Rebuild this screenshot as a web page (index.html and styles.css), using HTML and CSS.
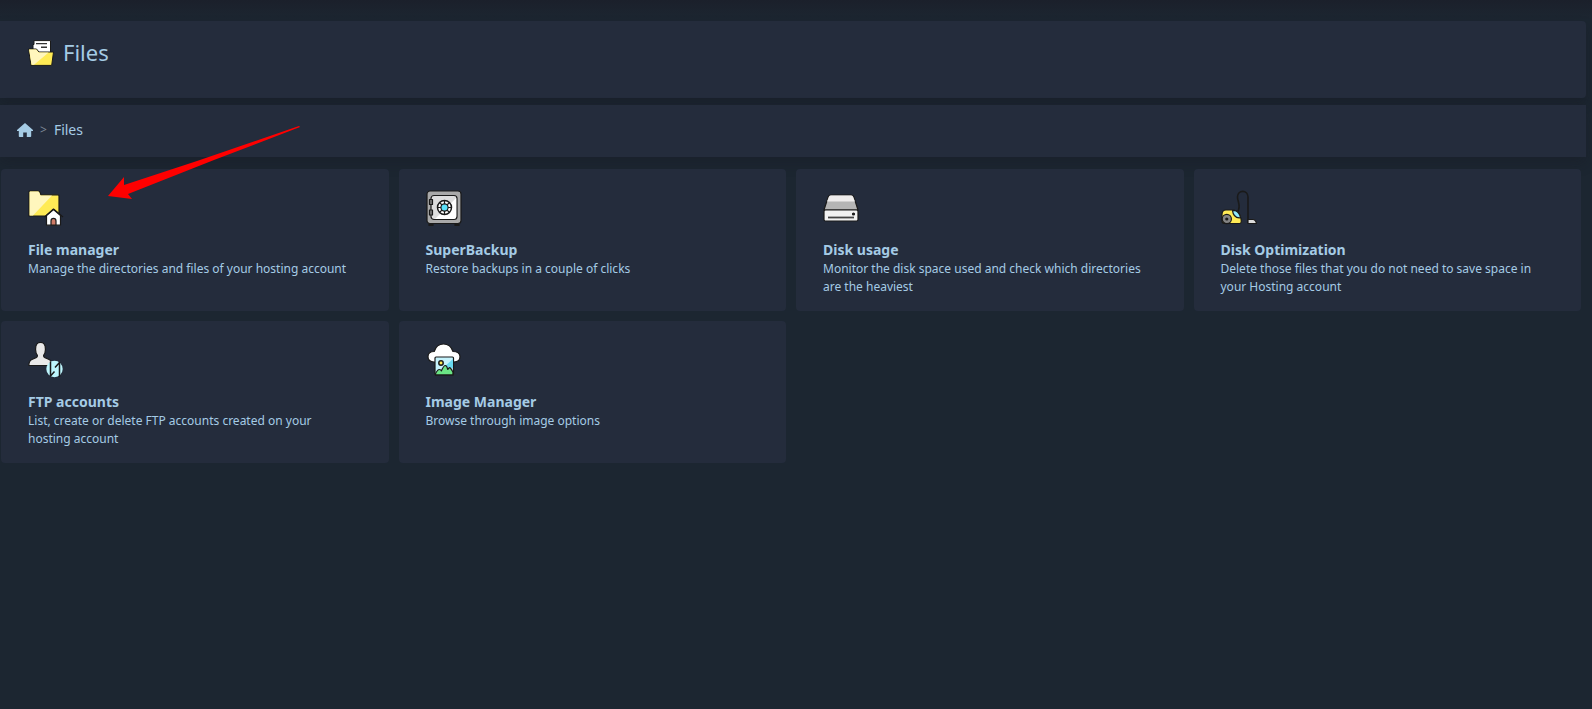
FILE: index.html
```html
<!DOCTYPE html>
<html lang="en">
<head>
    <meta charset="utf-8">
    <title>Files</title>
    <link rel="stylesheet" href="styles.css">
</head>
<body>
    <header class="page-header">
        <svg class="page-icon" viewBox="0 0 26 26" stroke="#1a1a1a" stroke-linejoin="round">
            <path d="M6 .6h16.500v14H5V4.500h1z" fill="#fff"/>
            <path d="M8 3.600H19M13 7.200h6" fill="none" stroke="#333" stroke-width="1.400"/>
            <path d="M.5 9h8l2.500 3h14.500l-1.800 13.400H3z" fill="#ffeb55"/>
            <path d="M1.100 9.600h7l2.500 3h10L6 24.800H3.600z" fill="#fff6bd" stroke="none"/>
        </svg>
        <h1>Files</h1>
    </header>

    <nav class="breadcrumb" aria-label="Breadcrumb">
        <a href="#" class="home" aria-label="Home">
            <svg viewBox="0 0 16 14"><path d="M8 0 0 7v1h1.800v5.200q0 .8.800.800h3.600V9.500h3.600V14h3.600q.8 0 .8-.8V8H16V7z"/></svg>
        </a>
        <span class="sep">&gt;</span>
        <a href="#">Files</a>
    </nav>

    <main class="cards">
        <a href="#" class="card">
            <svg viewBox="0 0 36 36" stroke="#1a1a1a" stroke-width="1.200" stroke-linejoin="round">
                <path d="M1 2q0-1 1-1h8q1.500 0 2 1.500l.8 2.300H30q1 0 1 1V26H1z" fill="#ffeb55"/>
                <path d="M1.600 2.200q0-.6.600-.6H10q1 0 1.500 1.400l1 2.500H24L5 25.400H1.600z" fill="#fff6bd" stroke="none"/>
                <path d="M18.500 25.500 25.500 19.500l7 6V35.200h-14z" fill="#fff"/>
                <path d="m16.500 27 9-8 9.500 8" fill="none"/>
                <path d="M23 35v-4q0-2.600 2.500-2.600T28 31v4z" fill="#cd7a66"/>
            </svg>
            <h2>File manager</h2>
            <p>Manage the directories and files of your hosting account</p>
        </a>
        <a href="#" class="card">
            <svg viewBox="0 0 36 36" stroke="#1a1a1a" stroke-width="1.200" stroke-linejoin="round">
                <path d="M3 33h4v2.500H3zM29 33h4v2.500h-4z" fill="#1a1a1a"/>
                <rect x="1" y="1" width="34" height="32.500" rx="3" fill="#a9a9a9"/>
                <rect x="5" y="5.500" width="26" height="24" rx="3" fill="#dedede"/>
                <path d="M30.200 8v18q0 3-3 3H9z" fill="#fff" stroke="none"/>
                <path d="M3.500 9.500h3v5h-3zM3.500 20h3v5h-3z" fill="#777"/>
                <circle cx="18.500" cy="17.500" r="7" fill="#fff" stroke-width="1.500"/>
                <path d="M18.500 10.500v14M11.500 17.500h14M13.500 12.500l10 10M23.500 12.500l-10 10"/>
                <circle cx="18.500" cy="17.500" r="3.600" fill="#5ce1fa"/>
            </svg>
            <h2>SuperBackup</h2>
            <p>Restore backups in a couple of clicks</p>
        </a>
        <a href="#" class="card">
            <svg viewBox="0 0 36 36" stroke="#1a1a1a" stroke-width="1.200" stroke-linejoin="round">
                <path d="M1 20 5.300 6.500Q6 5 8 5h20q2 0 2.700 1.500L35 20z" fill="#b5b5b5"/>
                <path d="m4 11.500 1.900-4.600q.6-1.300 2.100-1.300h20q1.500 0 2.100 1.300l1.900 4.600z" fill="#eeecec" stroke="none"/>
                <rect x="1" y="20" width="34" height="11" rx="1.500" fill="#f2f2f2"/>
                <path d="M5 27.500h26" stroke="#444" stroke-width="1.800"/>
                <circle cx="30.500" cy="24" r="1" fill="#1a1a1a"/>
            </svg>
            <h2>Disk usage</h2>
            <p>Monitor the disk space used and check which directories are the heaviest</p>
        </a>
        <a href="#" class="card">
            <svg viewBox="0 0 36 36" stroke="#1a1a1a" stroke-width="1.200" stroke-linejoin="round">
                <path d="M16.500 22c4-6 0-10 0-15 0-7.500 10.500-7.500 10.500 0V33" fill="none" stroke-width="1.600"/>
                <path d="M27 29.500h5q2.500 0 3.500 4H27z" fill="#ddd"/>
                <path d="M1 24.500Q1 20 5 20h8q6 1.500 7 9 1 4.500-1.500 4.500H3q-2 0-2-3z" fill="#ffeb55"/>
                <path d="M11.500 20.700h3q4 1.800 5 7-7 .8-8-7z" fill="#8fe9fb"/>
                <circle cx="5.800" cy="29" r="4.600" fill="#858585"/>
                <circle cx="5.800" cy="29" r="1" fill="#1a1a1a"/>
            </svg>
            <h2>Disk Optimization</h2>
            <p>Delete those files that you do not need to save space in your Hosting account</p>
        </a>
        <a href="#" class="card">
            <svg viewBox="0 0 36 36" stroke="#1a1a1a" stroke-width="1.200" stroke-linejoin="round">
                <path d="M.8 23.500q0-5 3.700-6.300l4-1.700q1-.5.900-2.200Q7.500 11 7.600 7.500q-.2-7 4.900-7t4.900 7q.1 3.500-1.800 5.800-.1 1.700.9 2.200l4 1.700q3.500 1.300 3.500 6.300z" fill="#e9e9e9"/>
                <circle cx="26.500" cy="27" r="8.200" fill="#bdf5fd" stroke="none"/>
                <path d="M22.500 19.500v14.500l4-4.500M31.500 35V20.500L27 25.500" fill="none" stroke-width="1.500"/>
            </svg>
            <h2>FTP accounts</h2>
            <p>List, create or delete FTP accounts created on your hosting account</p>
        </a>
        <a href="#" class="card">
            <svg viewBox="0 0 36 36" stroke="#1a1a1a" stroke-width="1.200" stroke-linejoin="round">
                <path d="M8 20Q2 19.500 2 14.700 2 9.500 8.200 9.500 10.500 2 17.500 2T27 9.500q7 .2 7 5.200 0 5.200-6.200 5.300z" fill="#fff"/>
                <rect x="9" y="15" width="18.500" height="18" rx="1" fill="#c5f3fc"/>
                <path d="M27 17v9l-9-1z" fill="#69d9ef" stroke="none"/>
                <path d="M9.600 31.500q2-4 3.700-4t2 1.500q2.500-5.500 4-5.500t2.500 4q1.500-2.500 2.500-1.500t2.600 4v2.900H9.600z" fill="#6be585"/>
                <circle cx="15" cy="21" r="2.200" fill="#ffeb55" stroke-width="1.500"/>
            </svg>
            <h2>Image Manager</h2>
            <p>Browse through image options</p>
        </a>
    </main>

    <!-- arrow pointing at File manager -->
    <svg class="pointer" viewBox="0 0 192 74" aria-hidden="true">
        <path d="M0 70 16 51v8l73-24L191 0l1 1-86 33-86 34 4 5z" fill="#f00"/>
    </svg>
</body>
</html>
```

FILE: styles.css
```css
* { box-sizing: border-box; }
body { margin: 0; padding: 21px 6px 0 0; min-height: 100vh; background: #1c2631 linear-gradient(#1b202b, #1c2631) no-repeat 0 0 / 100% 20px; color: #a5cbe5; font-family: "Noto Sans", sans-serif; }
h1, h2, p { margin: 0; }
a { color: inherit; text-decoration: none; }
svg { display: block; }

.page-header { display: flex; align-items: flex-start; gap: 9px; height: 77px; padding: 19px 28px; background-color: #242c3c; border-radius: 0 4px 4px 0; box-shadow: 0 6px 12px rgba(22, 22, 34, 0.3); }
.page-header h1 { font-size: 22px; font-weight: 400; line-height: 24px; }
.page-icon { width: 26px; height: 26px; }

.breadcrumb { display: flex; align-items: center; gap: 7px; height: 52px; margin-top: 7px; padding: 0 17px 3px; background-color: #242c3c; font-size: 14px; box-shadow: 0 6px 12px rgba(22, 22, 34, 0.3); }
.home svg { width: 16px; height: 14px; fill: #a5cbe5; }
.sep { color: #7c8796; font-size: 12px; }

.cards { position: relative; display: grid; grid-template-columns: repeat(4, 1fr); gap: 10px; margin-top: 12px; padding: 0 5px 0 1px; }
.card { min-height: 142px; padding: 21px 32px 14px 27px; background-color: #242c3c; border-radius: 4px; }
.card svg { width: 36px; height: 36px; }
.card h2 { margin-top: 14px; font-size: 14px; font-weight: 700; line-height: 20px; }
.card p { font-size: 12px; line-height: 18px; }

.pointer { position: absolute; left: 108px; top: 126px; width: 192px; height: 74px; }
```
